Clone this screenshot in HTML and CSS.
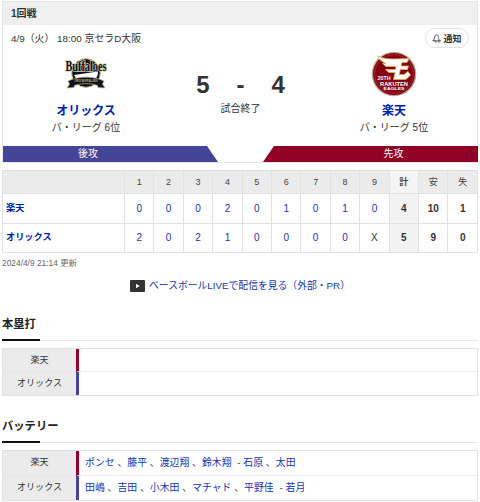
FILE: index.html
```html
<!DOCTYPE html>
<html lang="ja">
<head>
  <meta charset="UTF-8">
  <meta name="viewport" content="width=device-width, initial-scale=1.0">
  <title>オリックス 対 楽天</title>
  <link rel="stylesheet" href="styles.css">
</head>
<body>
  <section class="game">
    <header class="game-head">1回戦</header>
    <div class="game-info">
      <p class="game-date">4/9（火） 18:00 京セラD大阪</p>
      <button class="notice">
        <svg class="bell" viewBox="0 0 10 10" width="9" height="9" fill="none" stroke="#333" stroke-width="0.9" stroke-linecap="round" stroke-linejoin="round">
          <path d="M5 7.5H0.8L2.4 5.6L3 3C3.4 1.4 4.4 0.8 5.6 1.1S7.5 2.4 7.2 3.8L7 4.8M2.8 7.8C3 9.1 4.3 9.3 5 8.6M7.7 5.8V9.4M5.9 7.6H9.5"/>
        </svg>通知
      </button>
    </div>
    <div class="match">
      <div class="team">
        <svg class="emblem" viewBox="0 0 46 46" width="46" height="46">
          <circle cx="23" cy="22" r="14.3" fill="#0b1228" stroke="#c9b36a"/>
          <path d="M11 24L35 20.5C35 24 34 27 31 29C26 27 19 27 14 29Z" fill="#fff"/>
          <path d="M5 30L10 28C18 25.5 28 25.5 36 28L41 30L39.5 33L42 37L35 36.5L34.5 34.5C27 32 19 32 11.5 34.5L11 36.5L4 37L6.5 33Z" fill="#0b1228" stroke="#c9b36a" stroke-width="0.7"/>
          <text class="emblem-ribbon" x="23" y="31" textLength="23" lengthAdjust="spacingAndGlyphs">ORIX BUFFALOES</text>
          <text class="emblem-name" x="2.5" y="19.5" textLength="41" lengthAdjust="spacingAndGlyphs">Buffaloes</text>
        </svg>
        <a class="team-name" href="#">オリックス</a>
        <p class="team-rank">パ・リーグ 6位</p>
      </div>
      <div class="score">
        <p class="score-line"><span>5</span><span class="dash">-</span><span>4</span></p>
        <p class="state">試合終了</p>
      </div>
      <div class="team">
        <svg class="emblem" viewBox="0 0 46 46" width="46" height="46">
          <circle cx="23" cy="23" r="22.3" fill="#bca58e"/>
          <circle cx="23" cy="23" r="21" fill="#850010"/>
          <circle cx="23" cy="23" r="19.3" fill="none" stroke="#ad4d50" stroke-width="0.6"/>
          <path d="M6.5 5C11 7.5 17 8 24 8L38 7.5L36 11.5H31L30 15H37.5L36.5 18.5H29.3L28.3 23.5H33L37 20.5L39.5 24L35 28.5H22.5L24 21.5H18L14.5 18.5H24.3L25 15.5H15L11.5 12.5H15C10.5 10.5 7.5 8 6.5 5Z" fill="#fff" stroke="#e5b34f" stroke-width="0.8"/>
          <text class="eagles-text" x="13" y="29.3" textLength="13" lengthAdjust="spacingAndGlyphs">20TH</text>
          <text class="eagles-text" x="23" y="34.7" textLength="28" lengthAdjust="spacingAndGlyphs">RAKUTEN</text>
          <text class="eagles-text small" x="23" y="39.3" textLength="21" lengthAdjust="spacingAndGlyphs">EAGLES</text>
        </svg>
        <a class="team-name" href="#">楽天</a>
        <p class="team-rank">パ・リーグ 5位</p>
      </div>
    </div>
    <div class="sides">
      <div class="side bottom">後攻</div>
      <div class="side top">先攻</div>
    </div>
  </section>

  <table class="board">
    <thead>
      <tr>
        <th class="board-team"></th>
        <th>1</th><th>2</th><th>3</th><th>4</th><th>5</th><th>6</th><th>7</th><th>8</th><th>9</th>
        <th class="total">計</th><th>安</th><th>失</th>
      </tr>
    </thead>
    <tbody>
      <tr>
        <td class="name"><a href="#">楽天</a></td>
        <td><a href="#">0</a></td><td><a href="#">0</a></td><td><a href="#">0</a></td>
        <td><a href="#">2</a></td><td><a href="#">0</a></td><td><a href="#">1</a></td>
        <td><a href="#">0</a></td><td><a href="#">1</a></td><td><a href="#">0</a></td>
        <td class="sum total">4</td><td class="sum">10</td><td class="sum">1</td>
      </tr>
      <tr>
        <td class="name"><a href="#">オリックス</a></td>
        <td><a href="#">2</a></td><td><a href="#">0</a></td><td><a href="#">2</a></td>
        <td><a href="#">1</a></td><td><a href="#">0</a></td><td><a href="#">0</a></td>
        <td><a href="#">0</a></td><td><a href="#">0</a></td><td>X</td>
        <td class="sum total">5</td><td class="sum">9</td><td class="sum">0</td>
      </tr>
    </tbody>
  </table>
  <p class="updated">2024/4/9 21:14 更新</p>

  <a class="live" href="#">
    <svg viewBox="0 0 15 12" width="15" height="12">
      <rect width="15" height="12" rx="1" fill="#333"/>
      <path d="M6 3.7L9.8 6L6 8.3Z" fill="#fff"/>
    </svg>
    <span>ベースボールLIVEで配信を見る（外部・PR）</span>
  </a>

  <section class="detail homerun">
    <h2>本塁打</h2>
    <dl class="rows">
      <dt>楽天</dt>
      <dd class="eagles"></dd>
      <dt>オリックス</dt>
      <dd class="buffaloes"></dd>
    </dl>
  </section>

  <section class="detail battery">
    <h2>バッテリー</h2>
    <dl class="rows">
      <dt>楽天</dt>
      <dd class="eagles"><a href="#">ポンセ</a> 、<a href="#">藤平</a> 、<a href="#">渡辺翔</a> 、<a href="#">鈴木翔</a> <span class="sep">-</span> <a href="#">石原</a> 、<a href="#">太田</a></dd>
      <dt>オリックス</dt>
      <dd class="buffaloes"><a href="#">田嶋</a> 、<a href="#">吉田</a> 、<a href="#">小木田</a> 、<a href="#">マチャド</a> 、<a href="#">平野佳</a> <span class="sep">-</span> <a href="#">若月</a></dd>
    </dl>
  </section>
</body>
</html>
```
FILE: styles.css
```css
* {
  box-sizing: border-box;
}

body {
  margin: 0;
  padding: 1px 2px 0;
  background: #fff;
  color: #333;
  font-family: "Liberation Sans", "Noto Sans CJK JP", sans-serif;
  font-size: 10px;
  line-height: 14px;
}

p, h2, dl, dd {
  margin: 0;
}

a {
  color: #1536b0;
  text-decoration: none;
}

.game {
  height: 162px;
  border: 1px solid #e6e6e6;
}

.game-head {
  height: 23px;
  padding-left: 8px;
  background: #efefef;
  font-weight: bold;
  line-height: 23px;
}

.game-info {
  display: flex;
  justify-content: space-between;
  height: 24px;
  padding: 3px 8px 0;
}

.game-date {
  font-size: 9.9px;
  line-height: 21px;
}

.notice {
  display: flex;
  align-items: center;
  justify-content: center;
  gap: 2px;
  width: 44px;
  height: 20px;
  padding: 0;
  border: 1px solid #e2e2e2;
  border-radius: 10px;
  background: #fff;
  color: #333;
  font: bold 9px "Liberation Sans", "Noto Sans CJK JP", sans-serif;
}

.match {
  display: grid;
  grid-template-columns: 166px 1fr 166px;
  height: 97px;
}

.team {
  display: flex;
  flex-direction: column;
  align-items: center;
  padding-top: 2px;
}

.team-name {
  margin-top: 6px;
  color: #0020aa;
  font-size: 12px;
  font-weight: bold;
  line-height: 16px;
}

.team-rank {
  margin-top: 2px;
}

.emblem {
  display: block;
  overflow: visible;
}

.emblem-name {
  fill: #0b1228;
  stroke: #e0d3a0;
  stroke-width: 1.4px;
  paint-order: stroke;
  font: bold 14px "Liberation Serif", serif;
}

.emblem-ribbon {
  fill: #c9b36a;
  font: bold 3.5px "Liberation Sans", sans-serif;
  text-anchor: middle;
}

.eagles-text {
  fill: #fff;
  font: bold 4.8px "Liberation Sans", sans-serif;
  text-anchor: middle;
}

.eagles-text.small {
  font-size: 3.8px;
}

.score {
  padding: 22px 0 0 1px;
  text-align: center;
}

.score-line {
  display: flex;
  justify-content: center;
  gap: 27px;
  font-size: 24px;
  font-weight: bold;
  line-height: 28px;
}

.dash {
  width: 8px;
}

.state {
  margin-top: 3px;
}

.sides {
  display: flex;
  justify-content: space-between;
  height: 16px;
  margin-right: -1px;
}

.side {
  width: 215px;
  color: #fff;
  line-height: 15px;
  text-align: center;
}

.bottom {
  padding-right: 45px;
  background: #444499;
  clip-path: polygon(0 0, 204px 0, 100% 100%, 0 100%);
}

.top {
  padding-left: 46px;
  background: #900027;
  clip-path: polygon(11px 0, 100% 0, 100% 100%, 0 100%);
}

.board {
  width: 476px;
  margin-top: 7px;
  border-collapse: collapse;
  table-layout: fixed;
  text-align: center;
}

.board th,
.board td {
  padding: 0;
  border: 1px solid #e2e2e2;
}

.board th {
  height: 23px;
  background: #ebebeb;
  color: #444;
  font-size: 9px;
  font-weight: normal;
}

.board td {
  height: 30px;
}

.board tbody tr:last-child td {
  height: 29px;
}

.board .board-team {
  width: 122px;
}

.board .name {
  padding: 0 0 2px 3px;
  font-size: 9.2px;
  font-weight: bold;
  text-align: left;
}

.name a {
  color: #0020aa;
}

.board td.total {
  background: #f2f2f2;
}

.board th.total {
  background: #f4f4f4;
  font-weight: bold;
}

.sum {
  font-weight: bold;
}

.updated {
  margin-top: 3px;
  color: #666;
  font-size: 8.4px;
}

.live {
  display: flex;
  align-items: center;
  justify-content: center;
  gap: 4px;
  height: 14px;
  margin: 9px 0 0;
  font-size: 9.8px;
}

.detail h2 {
  border-bottom: 1px solid #e6e6e6;
  color: #222;
  font-size: 11.3px;
  line-height: 18px;
}

.detail h2::after {
  content: "";
  display: block;
  width: 38px;
  height: 2px;
  margin: 6px 0 -1px;
  background: #111;
}

.homerun {
  margin-top: 22px;
}

.battery {
  margin-top: 21px;
}

.rows {
  display: grid;
  grid-template-columns: 73px 1fr;
  grid-auto-rows: 23px;
  margin-top: 7px;
  border: 1px solid #e2e2e2;
}

.battery .rows {
  grid-auto-rows: 24.5px;
}

.rows dt {
  padding-top: 4px;
  border-bottom: 1px solid #e6e6e6;
  background: #ebebeb;
  font-size: 9.1px;
  text-align: center;
}

.rows dd {
  padding: 5px 0 0 6px;
  border-bottom: 1px solid #eee;
  border-left: 3px solid #900027;
  font-size: 9.9px;
}

.rows dd.buffaloes {
  border-left-color: #444499;
}

.rows dt:nth-last-of-type(1),
.rows dd:nth-last-of-type(1) {
  border-bottom: 0;
}

.sep {
  margin-left: 3px;
}
```
